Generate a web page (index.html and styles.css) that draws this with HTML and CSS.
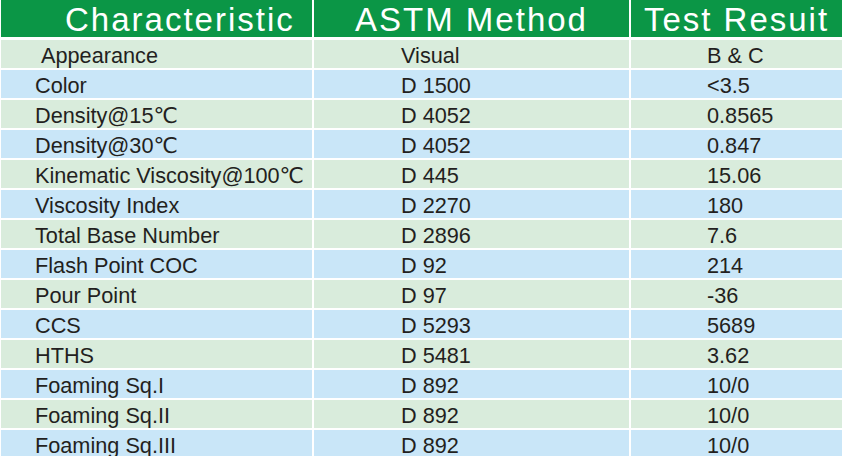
FILE: index.html
```html
<!DOCTYPE html>
<html>
<head>
<meta charset="utf-8">
<link rel="stylesheet" href="styles.css">
</head>
<body>
<div class="spec">
  <div class="hd hd-char">Characteristic</div>
  <div class="hd">ASTM Method</div>
  <div class="hd">Test Resuit</div>

  <div class="c c1 g first">Appearance</div><div class="c c2 g">Visual</div><div class="c c3 g">B &amp; C</div>
  <div class="c c1 b">Color</div><div class="c c2 b">D 1500</div><div class="c c3 b">&lt;3.5</div>
  <div class="c c1 g">Density@15℃</div><div class="c c2 g">D 4052</div><div class="c c3 g">0.8565</div>
  <div class="c c1 b">Density@30℃</div><div class="c c2 b">D 4052</div><div class="c c3 b">0.847</div>
  <div class="c c1 g">Kinematic Viscosity@100℃</div><div class="c c2 g">D 445</div><div class="c c3 g">15.06</div>
  <div class="c c1 b">Viscosity Index</div><div class="c c2 b">D 2270</div><div class="c c3 b">180</div>
  <div class="c c1 g">Total Base Number</div><div class="c c2 g">D 2896</div><div class="c c3 g">7.6</div>
  <div class="c c1 b">Flash Point COC</div><div class="c c2 b">D 92</div><div class="c c3 b">214</div>
  <div class="c c1 g">Pour Point</div><div class="c c2 g">D 97</div><div class="c c3 g">-36</div>
  <div class="c c1 b">CCS</div><div class="c c2 b">D 5293</div><div class="c c3 b">5689</div>
  <div class="c c1 g">HTHS</div><div class="c c2 g">D 5481</div><div class="c c3 g">3.62</div>
  <div class="c c1 b">Foaming Sq.I</div><div class="c c2 b">D 892</div><div class="c c3 b">10/0</div>
  <div class="c c1 g">Foaming Sq.II</div><div class="c c2 g">D 892</div><div class="c c3 g">10/0</div>
  <div class="c c1 b">Foaming Sq.III</div><div class="c c2 b">D 892</div><div class="c c3 b">10/0</div>
</div>
</body>
</html>
```
FILE: styles.css
```css
html, body {
  margin: 0;
  padding: 0;
  background: #ffffff;
}
body {
  padding-left: 1px;
  font-family: "Liberation Sans", Arial, "DejaVu Sans", sans-serif;
  color: #231f20;
}
.spec {
  display: grid;
  grid-template-columns: 311px 315px 211px;
  column-gap: 2px;
  row-gap: 2px;
  width: 841px;
}
.hd {
  background: #0b9646;
  color: #ffffff;
  height: 37px;
  margin-bottom: 1px;
  box-sizing: border-box;
  padding-top: 2px;
  line-height: 35px;
  font-size: 33px;
  letter-spacing: 2px;
  text-align: center;
  white-space: nowrap;
}
.hd-char {
  text-align: left;
  padding-left: 64px;
}
.c {
  height: 28px;
  box-sizing: border-box;
  padding-top: 4px;
  line-height: 24px;
  font-size: 21.7px;
  white-space: nowrap;
}
.g { background: #d9ecdc; }
.b { background: #c9e6f8; }
.c1 { padding-left: 34px; }
.c1.first { padding-left: 40px; }
.c2 { padding-left: 87px; }
.c3 { padding-left: 76px; }
```
